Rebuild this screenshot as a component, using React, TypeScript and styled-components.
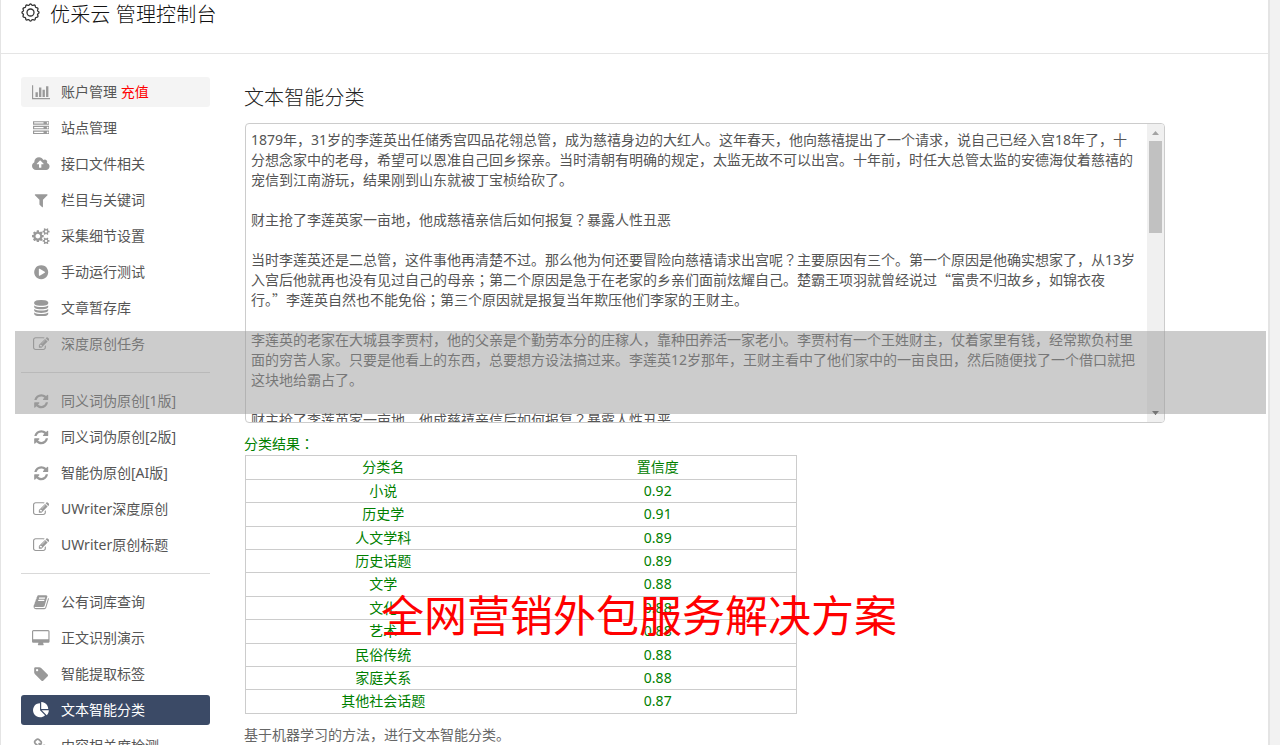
import React from "react";
import styled, { createGlobalStyle } from "styled-components";

const FONT = '"Noto Sans", "Noto Sans CJK SC", sans-serif';

const Global = createGlobalStyle`
  * { box-sizing: border-box; }
  html, body { margin: 0; padding: 0; overflow: hidden; background: #f2f2f2; }
  body { font-family: ${FONT}; font-size: 14px; color: #555; font-weight: 400; }
`;

const Page = styled.div`
  position: relative;
  width: 1270px;
  height: 745px;
  overflow: hidden;
  background: #fff;
  border-left: 1px solid #e4e4e4;
  border-right: 2px solid #e4e4e4;
`;

const Header = styled.header`
  display: flex;
  align-items: flex-start;
  height: 54px;
  padding-left: 20px;
  border-bottom: 1px solid #e5e5e5;
`;

const GearIcon = styled.svg`
  width: 19px;
  height: 19px;
  margin: 3px 10px 0 0;
  overflow: visible;
`;

const Title = styled.h1`
  margin: 0;
  font-size: 20px;
  line-height: 29px;
  font-weight: 300;
  letter-spacing: 0.15px;
  color: #111;
`;

const Body = styled.div`
  display: flex;
  padding: 23px 0 0 20px;
`;

const Sidebar = styled.nav`
  width: 189px;
  margin-right: 35px;
  flex: none;
`;

const Item = styled.a<{ $tone?: "light" | "active" }>`
  display: flex;
  align-items: center;
  height: 30px;
  margin-bottom: 6px;
  padding-left: 10px;
  border-radius: 3px;
  line-height: 30px;
  white-space: pre;
  color: ${(p) => (p.$tone === "active" ? "#fff" : "#555")};
  background: ${(p) => (p.$tone === "active" ? "#3b4a66" : p.$tone === "light" ? "#f4f4f4" : "transparent")};
`;

const ItemText = styled.span`
  height: 30px;
`;

const IconBox = styled.span<{ $active: boolean }>`
  display: flex;
  justify-content: center;
  width: 20px;
  margin-right: 10px;
  color: ${(p) => (p.$active ? "#fff" : "#999")};
  svg { display: block; height: 16.4px; fill: currentColor; }
`;

const Accent = styled.span`
  color: #f00;
`;

const Divider = styled.div`
  height: 1px;
  margin: 13px 0;
  background: #d9d9d9;
`;

const Group = styled.div`
  display: flex;
  flex-direction: column;
  & > :last-child { margin-bottom: 0; }
`;

const Main = styled.main`
  width: 921px;
  flex: none;
`;

const Heading = styled.h2`
  margin: 0 0 0 -1px;
  height: 46px;
  line-height: 41px;
  font-size: 20px;
  font-weight: 300;
  letter-spacing: 0.1px;
  color: #222;
`;

const TextBox = styled.div`
  display: flex;
  width: 920px;
  height: 300px;
  overflow: hidden;
  border: 1px solid #ccc;
  border-radius: 4px;
`;

const TextBody = styled.div`
  flex: 1;
  padding: 6px 0 0 5px;
  min-width: 0;
`;

const Line = styled.div`
  height: 20px;
  line-height: 20px;
  white-space: pre;
`;

const CenteredMark = styled.span`
  font-family: "Noto Sans CJK JP", sans-serif;
  line-height: 1;
`;

const WideQuote = styled.span`
  font-family: "Noto Sans CJK SC", sans-serif;
  line-height: 1;
`;

const ScrollBar = styled.div`
  display: flex;
  flex-direction: column;
  align-items: center;
  width: 17px;
  background: #f0f0f0;
`;

const Arrow = styled.svg`
  width: 17px;
  height: 17px;
  flex: none;
`;

const Track = styled.div`
  flex: 1;
  width: 13px;
`;

const Thumb = styled.div`
  height: 92px;
  background: #c1c1c1;
`;

const ResultLabel = styled.div`
  height: 32px;
  margin-left: -1px;
  line-height: 42px;
  color: #008000;
`;

const Table = styled.div`
  width: 552px;
  border: 1px solid #ccc;
  border-bottom: 0;
  color: #008000;
`;

const Row = styled.div<{ $h: number }>`
  display: grid;
  grid-template-columns: 1fr 1fr;
  height: ${(p) => p.$h}px;
  padding-right: 1px;
  line-height: 22px;
  text-align: center;
  border-bottom: 1px solid #ccc;
`;

const Note = styled.p`
  margin: 11px 0 0 -1px;
  line-height: 20px;
  color: #666;
`;

const Band = styled.div`
  position: absolute;
  left: 14px;
  top: 331px;
  width: 1251px;
  height: 83px;
  background: rgba(153, 153, 153, 0.5);
`;

const Banner = styled.div`
  position: absolute;
  left: 380px;
  top: 584px;
  font-size: 43px;
  line-height: 64px;
  white-space: nowrap;
  font-weight: 400;
  color: #f00;
`;

const icons = {
  bars: ["0 0 2048 1792", "M640 896v512h-256v-512h256zm384-512v1024h-256v-1024h256zm1024 1152v128h-2048v-1536h128v1408h1920zm-640-896v768h-256v-768h256zm384-384v1152h-256v-1152h256z"],
  server: ["0 0 1792 1792", "M128 1408h1024v-128h-1024v128zm0-512h1024v-128h-1024v128zm1568 448q0-40-28-68t-68-28-68 28-28 68 28 68 68 28 68-28 28-68zm-1568-960h1024v-128h-1024v128zm1568 448q0-40-28-68t-68-28-68 28-28 68 28 68 68 28 68-28 28-68zm0-512q0-40-28-68t-68-28-68 28-28 68 28 68 68 28 68-28 28-68zm96 832v384h-1792v-384h1792zm0-512v384h-1792v-384h1792zm0-512v384h-1792v-384h1792z"],
  cloud: ["-64 0 1920 1792", "M1216 864q0-14-9-23l-352-352q-9-9-23-9t-23 9l-351 351q-10 12-10 24 0 14 9 23t23 9h224v352q0 13 9.5 22.5t22.5 9.5h192q13 0 22.5-9.5t9.5-22.5v-352h224q13 0 22.5-9.5t9.5-22.5zm640 288q0 159-112.5 271.5t-271.5 112.5h-1088q-185 0-316.5-131.5t-131.5-316.5q0-130 70-240t188-165q-2-30-2-43 0-212 150-362t362-150q156 0 285.5 87t188.5 231q71-62 166-62 106 0 181 75t75 181q0 76-41 138 130 31 213.5 135.5t83.5 238.5z"],
  filter: ["0 0 1792 1792", "M1595 295q17 41-14 70l-493 493v742q0 42-39 59-13 5-25 5-27 0-45-19l-256-256q-19-19-19-45v-486l-493-493q-31-29-14-70 17-39 59-39h1280q42 0 59 39z"],
  cogs: ["-64 0 1920 1792", "M832 896q0-106-75-181t-181-75-181 75-75 181 75 181 181 75 181-75 75-181zm768 512q0-52-38-90t-90-38-90 38-38 90q0 53 37.5 90.5t90.5 37.5 90.5-37.5 37.5-90.5zm0-1024q0-52-38-90t-90-38-90 38-38 90q0 53 37.5 90.5t90.5 37.5 90.5-37.5 37.5-90.5zm-384 421v185q0 10-7 19.5t-16 10.5l-155 24q-11 35-32 76 34 48 90 115 7 11 7 20 0 12-7 19-23 30-82.5 89.5t-78.5 59.5q-11 0-21-7l-115-90q-37 19-77 31-11 108-23 155-7 24-30 24h-186q-11 0-20-7.5t-10-17.5l-23-153q-34-10-75-31l-118 89q-7 7-20 7-11 0-21-8-144-133-144-160 0-9 7-19 10-14 41-53t47-61q-23-44-35-82l-152-24q-10-1-17-9.5t-7-19.5v-185q0-10 7-19.5t16-10.5l155-24q11-35 32-76-34-48-90-115-7-11-7-20 0-12 7-20 22-30 82-89t79-59q11 0 21 7l115 90q34-18 77-32 11-108 23-154 7-24 30-24h186q11 0 20 7.5t10 17.5l23 153q34 10 75 31l118-89q8-7 20-7 11 0 21 8 144 133 144 160 0 8-7 19-12 16-42 54t-45 60q23 48 34 82l152 23q10 2 17 10.5t7 19.5zm640 533v140q0 16-149 31-12 27-30 52 51 113 51 138 0 4-4 7-122 71-124 71-8 0-46-47t-52-68q-20 2-30 2t-30-2q-14 21-52 68t-46 47q-2 0-124-71-4-3-4-7 0-25 51-138-18-25-30-52-149-15-149-31v-140q0-16 149-31 13-29 30-52-51-113-51-138 0-4 4-7 4-2 35-20t59-34 30-16q8 0 46 46.5t52 67.5q20-2 30-2t30 2q51-71 92-112l6-2q4 0 124 70 4 3 4 7 0 25-51 138 17 23 30 52 149 15 149 31zm0-1024v140q0 16-149 31-12 27-30 52 51 113 51 138 0 4-4 7-122 71-124 71-8 0-46-47t-52-68q-20 2-30 2t-30-2q-14 21-52 68t-46 47q-2 0-124-71-4-3-4-7 0-25 51-138-18-25-30-52-149-15-149-31v-140q0-16 149-31 13-29 30-52-51-113-51-138 0-4 4-7 4-2 35-20t59-34 30-16q8 0 46 46.5t52 67.5q20-2 30-2t30 2q51-71 92-112l6-2q4 0 124 70 4 3 4 7 0 25-51 138 17 23 30 52 149 15 149 31z"],
  play: ["0 0 1792 1792", "M896 128q209 0 385.5 103t279.5 279.5 103 385.5-103 385.5-279.5 279.5-385.5 103-385.5-103-279.5-279.5-103-385.5 103-385.5 279.5-279.5 385.5-103zm384 823q32-18 32-55t-32-55l-544-320q-31-19-64-1-32 19-32 56v640q0 37 32 56 16 8 32 8 17 0 32-9z"],
  database: ["0 0 1792 1792", "M896 768q237 0 443-43t325-127v170q0 69-103 128t-280 93.5-385 34.5-385-34.5-280-93.5-103-128v-170q119 84 325 127t443 43zm0 768q237 0 443-43t325-127v170q0 69-103 128t-280 93.5-385 34.5-385-34.5-280-93.5-103-128v-170q119 84 325 127t443 43zm0-384q237 0 443-43t325-127v170q0 69-103 128t-280 93.5-385 34.5-385-34.5-280-93.5-103-128v-170q119 84 325 127t443 43zm0-1152q208 0 385 34.5t280 93.5 103 128v128q0 69-103 128t-280 93.5-385 34.5-385-34.5-280-93.5-103-128v-128q0-69 103-128t280-93.5 385-34.5z"],
  edit: ["0 0 1792 1792", "M888 1184l116-116-152-152-116 116v56h96v96h56zm440-720q-16-16-33 1l-350 350q-17 17-1 33t33-1l350-350q17-17 1-33zm80 594v190q0 119-84.5 203.5t-203.5 84.5h-832q-119 0-203.5-84.5t-84.5-203.5v-832q0-119 84.5-203.5t203.5-84.5h832q63 0 117 25 15 7 18 23 3 17-9 29l-49 49q-14 14-32 8-23-6-45-6h-832q-66 0-113 47t-47 113v832q0 66 47 113t113 47h832q66 0 113-47t47-113v-126q0-13 9-22l64-64q15-15 35-7t20 29zm-96-738l288 288-672 672h-288v-288zm444 132l-92 92-288-288 92-92q28-28 68-28t68 28l152 152q28 28 28 68t-28 68z"],
  refresh: ["0 0 1792 1792", "M1639 1056q0 5-1 7-64 268-268 434.5t-478 166.5q-146 0-282.5-55t-243.5-157l-129 129q-19 19-45 19t-45-19-19-45v-448q0-26 19-45t45-19h448q26 0 45 19t19 45-19 45l-137 137q71 66 161 102t187 36q134 0 250-65t186-179q11-17 53-117 8-23 30-23h192q13 0 22.5 9.5t9.5 22.5zm25-800v448q0 26-19 45t-45 19h-448q-26 0-45-19t-19-45 19-45l138-138q-148-137-349-137-134 0-250 65t-186 179q-11 17-53 117-8 23-30 23h-199q-13 0-22.5-9.5t-9.5-22.5v-7q65-268 270-434.5t480-166.5q146 0 284 55.5t245 156.5l130-129q19-19 45-19t45 19 19 45z"],
  book: ["0 0 1792 1792", "M1703 478q40 57 18 129l-275 906q-19 64-76.5 107.5t-122.5 43.5h-923q-77 0-148.5-53.5t-99.5-131.5q-24-67-2-127 0-4 3-27t4-37q1-8-3-21.5t-3-19.5q2-11 8-21t16.5-23.5 16.5-23.5q23-38 45-91.5t30-91.5q3-10 .5-30t-.5-28q3-11 17-28t17-23q21-36 42-92t25-90q1-9-2.5-32t.5-28q4-13 22-30.5t22-22.5q19-26 42.5-84.5t27.5-96.5q1-8-3-25.5t-2-26.5q2-8 9-18t18-23 17-21q8-12 16.5-30.5t15-35 16-36 19.5-32 26.5-23.5 36-11.5 47.5 5.5l-1 3q38-9 51-9h761q74 0 114 56t18 130l-274 906q-36 119-71.5 153.5t-128.5 34.5h-869q-27 0-38 15-11 16-1 43 24 70 144 70h923q29 0 56-15.5t35-41.5l300-987q7-22 5-57 38 15 59 43zm-1064 2q-4 13 2 22.5t20 9.5h608q13 0 25.5-9.5t16.5-22.5l21-64q4-13-2-22.5t-20-9.5h-608q-13 0-25.5 9.5t-16.5 22.5zm-83 256q-4 13 2 22.5t20 9.5h608q13 0 25.5-9.5t16.5-22.5l21-64q4-13-2-22.5t-20-9.5h-608q-13 0-25.5 9.5t-16.5 22.5z"],
  desktop: ["-64 0 1920 1792", "M1728 992v-832q0-13-9.5-22.5t-22.5-9.5h-1600q-13 0-22.5 9.5t-9.5 22.5v832q0 13 9.5 22.5t22.5 9.5h1600q13 0 22.5-9.5t9.5-22.5zm128-832v1088q0 66-47 113t-113 47h-544q0 37 16 77.5t32 71 16 43.5q0 26-19 45t-45 19h-512q-26 0-45-19t-19-45q0-14 16-44t32-70 16-78h-544q-66 0-113-47t-47-113v-1088q0-66 47-113t113-47h1600q66 0 113 47t47 113z"],
  tag: ["0 0 1792 1792", "M576 448q0-53-37.5-90.5t-90.5-37.5-90.5 37.5-37.5 90.5 37.5 90.5 90.5 37.5 90.5-37.5 37.5-90.5zm1067 576q0 53-37 90l-491 492q-39 37-91 37-53 0-90-37l-715-716q-38-37-64.5-101t-26.5-117v-416q0-52 38-90t90-38h416q53 0 117 26.5t102 64.5l715 714q37 39 37 91z"],
  pie: ["0 0 1792 1792", "M768 890l546 546q-106 108-247.5 168t-298.5 60q-209 0-385.5-103t-279.5-279.5-103-385.5 103-385.5 279.5-279.5 385.5-103v762zm187 6h773q0 157-60 298.5t-168 247.5zm709-128h-768v-768q209 0 385.5 103t279.5 279.5 103 385.5z"],
  link: ["0 0 1792 1792", "M1520 1216q0-40-28-68l-208-208q-28-28-68-28-42 0-72 32 3 3 19 18.5t21.5 21.5 15 19 13 25.5 3.5 27.5q0 40-28 68t-68 28q-15 0-27.5-3.5t-25.5-13-19-15-21.5-21.5-18.5-19q-33 31-33 73 0 40 28 68l206 207q27 27 68 27 40 0 68-26l147-146q28-28 28-67zm-703-705q0-40-28-68l-206-207q-28-28-68-28-39 0-68 27l-147 146q-28 28-28 67 0 40 28 68l208 208q27 27 68 27 42 0 72-31-3-3-19-18.5t-21.5-21.5-15-19-13-25.5-3.5-27.5q0-40 28-68t68-28q15 0 27.5 3.5t25.5 13 19 15 21.5 21.5 18.5 19q33-31 33-73zm895 705q0 120-85 203l-147 146q-83 83-203 83-121 0-204-85l-206-207q-83-83-83-203 0-123 88-209l-88-88q-86 88-208 88-120 0-204-84l-208-208q-84-84-84-204t85-203l147-146q83-83 203-83 121 0 204 85l206 207q83 83 83 203 0 123-88 209l88 88q86-88 208-88 120 0 204 84l208 208q84 84 84 204z"],
} as const;

type IconName = keyof typeof icons;
type Entry = { icon: IconName; label: string; extra?: string; tone?: "light" | "active" };

const groups: Entry[][] = [
  [
    { icon: "bars", label: "账户管理 ", extra: "充值", tone: "light" },
    { icon: "server", label: "站点管理" },
    { icon: "cloud", label: "接口文件相关" },
    { icon: "filter", label: "栏目与关键词" },
    { icon: "cogs", label: "采集细节设置" },
    { icon: "play", label: "手动运行测试" },
    { icon: "database", label: "文章暂存库" },
    { icon: "edit", label: "深度原创任务" },
  ],
  [
    { icon: "refresh", label: "同义词伪原创[1版]" },
    { icon: "refresh", label: "同义词伪原创[2版]" },
    { icon: "refresh", label: "智能伪原创[AI版]" },
    { icon: "edit", label: "UWriter深度原创" },
    { icon: "edit", label: "UWriter原创标题" },
  ],
  [
    { icon: "book", label: "公有词库查询" },
    { icon: "desktop", label: "正文识别演示" },
    { icon: "tag", label: "智能提取标签" },
    { icon: "pie", label: "文本智能分类", tone: "active" },
    { icon: "link", label: "内容相关度检测" },
  ],
];

const article = [
  "1879年，31岁的李莲英出任储秀宫四品花翎总管，成为慈禧身边的大红人。这年春天，他向慈禧提出了一个请求，说自己已经入宫18年了，十",
  "分想念家中的老母，希望可以恩准自己回乡探亲。当时清朝有明确的规定，太监无故不可以出宫。十年前，时任大总管太监的安德海仗着慈禧的",
  "宠信到江南游玩，结果刚到山东就被丁宝桢给砍了。",
  "",
  "财主抢了李莲英家一亩地，他成慈禧亲信后如何报复？暴露人性丑恶",
  "",
  "当时李莲英还是二总管，这件事他再清楚不过。那么他为何还要冒险向慈禧请求出宫呢？主要原因有三个。第一个原因是他确实想家了，从13岁",
  "入宫后他就再也没有见过自己的母亲；第二个原因是急于在老家的乡亲们面前炫耀自己。楚霸王项羽就曾经说过“富贵不归故乡，如锦衣夜",
  "行。”李莲英自然也不能免俗；第三个原因就是报复当年欺压他们李家的王财主。",
  "",
  "李莲英的老家在大城县李贾村，他的父亲是个勤劳本分的庄稼人，靠种田养活一家老小。李贾村有一个王姓财主，仗着家里有钱，经常欺负村里",
  "面的穷苦人家。只要是他看上的东西，总要想方设法搞过来。李莲英12岁那年，王财主看中了他们家中的一亩良田，然后随便找了一个借口就把",
  "这块地给霸占了。",
  "",
  "财主抢了李莲英家一亩地，他成慈禧亲信后如何报复？暴露人性丑恶",
];

const results: [string, string, number][] = [
  ["分类名", "置信度", 24],
  ["小说", "0.92", 23],
  ["历史学", "0.91", 24],
  ["人文学科", "0.89", 23],
  ["历史话题", "0.89", 23],
  ["文学", "0.88", 24],
  ["文化", "0.88", 23],
  ["艺术", "0.88", 24],
  ["民俗传统", "0.88", 23],
  ["家庭关系", "0.88", 23],
  ["其他社会话题", "0.87", 24],
];

const gearPath = (() => {
  const n = 12;
  const pts: string[] = [];
  for (let i = 0; i <= 144; i++) {
    const a = (i / 144) * Math.PI * 2;
    const r = 7.9 + 0.6 * Math.cos(n * a);
    pts.push(`${(9.5 + r * Math.sin(a)).toFixed(2)} ${(9.5 - r * Math.cos(a)).toFixed(2)}`);
  }
  return `M${pts.join("L")}Z`;
})();

function Glyph({ name }: { name: IconName }) {
  const [viewBox, d] = icons[name];
  return (
    <svg viewBox={viewBox} aria-hidden="true">
      <path d={d} />
    </svg>
  );
}

// Centres ？：； in their cell and keeps curly quotes full-width.
function Punctuated({ text }: { text: string }) {
  return (
    <>
      {text.split(/([？：；“”])/).map((part, i) => {
        if (/^[？：；]$/.test(part)) return <CenteredMark key={i} lang="ja">{part}</CenteredMark>;
        if (/^[“”]$/.test(part)) return <WideQuote key={i} lang="zh-CN">{part}</WideQuote>;
        return part;
      })}
    </>
  );
}

export default function App() {
  return (
    <>
      <Global />
      <Page>
        <Header>
          <GearIcon viewBox="0 0 19 19" fill="none" stroke="#333" strokeWidth="1.3">
            <path d={gearPath} />
            <circle cx="9.5" cy="9.5" r="3.5" />
          </GearIcon>
          <Title>优采云 管理控制台</Title>
        </Header>
        <Body>
          <Sidebar>
            {groups.map((group, g) => (
              <React.Fragment key={g}>
                {g > 0 && <Divider />}
                <Group>
                  {group.map((e) => (
                    <Item key={e.label} $tone={e.tone}>
                      <IconBox $active={e.tone === "active"}>
                        <Glyph name={e.icon} />
                      </IconBox>
                      <ItemText>
                        {e.label}
                        {e.extra && <Accent>{e.extra}</Accent>}
                      </ItemText>
                    </Item>
                  ))}
                </Group>
              </React.Fragment>
            ))}
          </Sidebar>
          <Main>
            <Heading>文本智能分类</Heading>
            <TextBox>
              <TextBody>
                {article.map((line, i) => (
                  <Line key={i}>
                    <Punctuated text={line} />
                  </Line>
                ))}
              </TextBody>
              <ScrollBar>
                <Arrow viewBox="0 0 17 17">
                  <path d="M5 11L8.5 7L12 11Z" fill="#a3a3a3" />
                </Arrow>
                <Track>
                  <Thumb />
                </Track>
                <Arrow viewBox="0 0 17 17">
                  <path d="M5 6L8.5 10L12 6Z" fill="#505050" />
                </Arrow>
              </ScrollBar>
            </TextBox>
            <ResultLabel>
              <Punctuated text="分类结果：" />
            </ResultLabel>
            <Table>
              {results.map(([name, score, h]) => (
                <Row key={name} $h={h}>
                  <span>{name}</span>
                  <span>{score}</span>
                </Row>
              ))}
            </Table>
            <Note>基于机器学习的方法，进行文本智能分类。</Note>
          </Main>
        </Body>
        <Band />
        <Banner>全网营销外包服务解决方案</Banner>
      </Page>
    </>
  );
}
